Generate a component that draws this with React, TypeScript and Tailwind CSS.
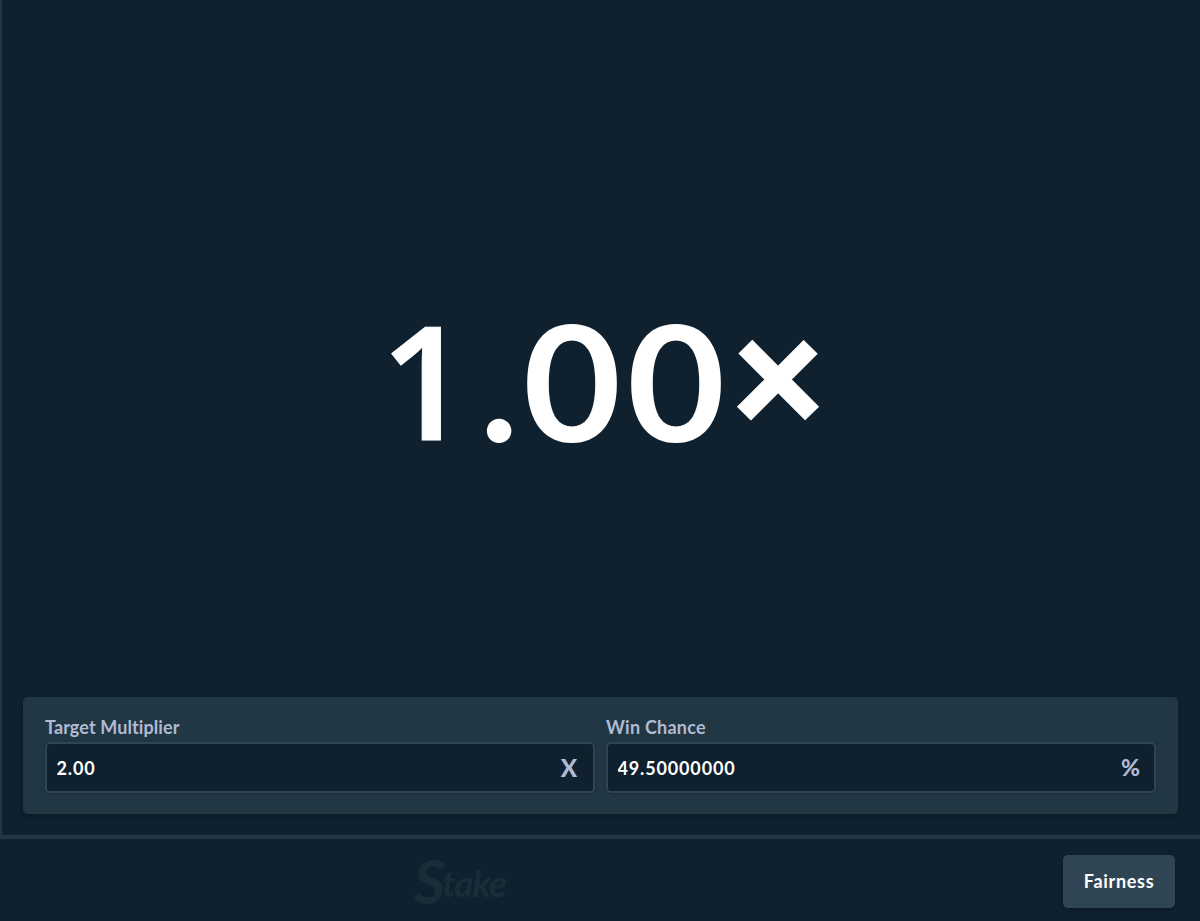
import React from "react";

function LimboField({
  label,
  defaultValue,
  suffix,
  labelSpacing,
}: {
  label: string;
  defaultValue: string;
  suffix: React.ReactNode;
  labelSpacing: string;
}) {
  return (
    <label className="flex-1 flex flex-col">
      <span
        className={`h-[29px] text-[18px] leading-[29px] font-bold text-[#b1bad3] ${labelSpacing}`}
      >
        {label}
      </span>
      <span className="flex h-[51px] items-center rounded-[5px] border-2 border-[#2f4553] bg-[#0f212e] shadow-[0_1px_3px_rgba(0,0,0,0.2)]">
        <input
          type="text"
          defaultValue={defaultValue}
          className="h-full min-w-0 flex-1 bg-transparent pl-[9.5px] text-[18px] font-bold tracking-[0.85px] text-white outline-none"
        />
        {suffix}
      </span>
    </label>
  );
}

function Multiplier() {
  return (
    <h1 className="flex items-baseline text-[161px] leading-[190px] font-bold text-white">
      <span className="relative top-[-2px] w-[100px] font-['Open_Sans',sans-serif] text-[158px] font-semibold [-webkit-text-stroke:1px_white]">
        1
      </span>
      <span className="w-[43px]">.</span>
      <span className="w-[104px] origin-left scale-x-105">0</span>
      <span className="w-[102px] origin-left scale-x-105">0</span>
      <span className="relative top-[-8px] left-[2px] w-[92px] text-[162px] font-black [-webkit-text-stroke:3px_white]">
        ×
      </span>
    </h1>
  );
}

export default function App() {
  return (
    <div className="flex h-[921px] w-[1200px] flex-col overflow-hidden bg-[#0f212e] font-['Lato',sans-serif]">
      <main className="flex h-[839px] flex-col border-b-4 border-l-2 border-[#213743] pr-[22px] pb-[21px] pl-[21px]">
        <div className="flex flex-1 items-center justify-center pt-[64px]">
          <Multiplier />
        </div>
        <div className="flex h-[117px] gap-[11px] rounded-[5px] bg-[#213743] px-[22px] pt-[16px] shadow-[0_2px_5px_rgba(0,0,0,0.2)]">
          <LimboField
            label="Target Multiplier"
            defaultValue="2.00"
            labelSpacing="tracking-[0.1px]"
            suffix={<span className="mr-[16px] text-[24px] font-black text-[#b1bad3]">X</span>}
          />
          <LimboField
            label="Win Chance"
            defaultValue="49.50000000"
            labelSpacing="tracking-[0.25px]"
            suffix={<span className="mr-[14px] text-[23px] font-black text-[#b1bad3]">%</span>}
          />
        </div>
      </main>

      <footer className="flex flex-1 items-center justify-between pt-[3px] pr-[25px] pl-[414px]">
        <div className="flex h-[50px] text-[#192d39] italic">
          <span className="w-[28px] text-[61px] leading-[47px] font-bold">S</span>
          <span className="text-[37px] leading-[52px] font-bold tracking-[-1px]">take</span>
        </div>
        <button
          type="button"
          className="h-[53px] w-[112px] rounded-[5px] bg-[#2f4553] text-[18px] font-bold tracking-[0.7px] text-white shadow-[0_2px_4px_rgba(0,0,0,0.2)]"
        >
          Fairness
        </button>
      </footer>
    </div>
  );
}
